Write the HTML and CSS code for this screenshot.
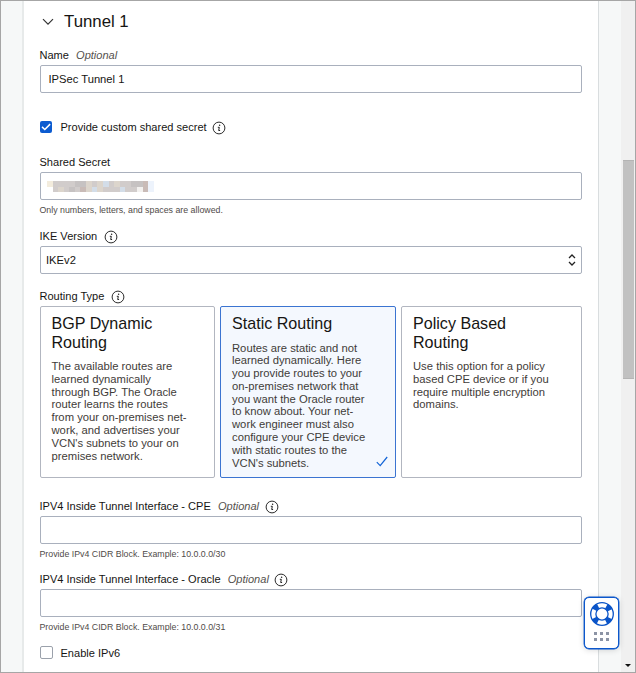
FILE: index.html
```html
<!DOCTYPE html>
<html lang="en">
<head>
<meta charset="utf-8">
<title>Tunnel 1</title>
<link rel="stylesheet" href="styles.css">
</head>
<body>
<svg class="defs" width="0" height="0" aria-hidden="true">
  <symbol id="info" viewBox="0 0 14 14">
    <circle cx="7" cy="7" r="5.9" fill="none" stroke="#2b2b2b" stroke-width="1"/>
    <circle cx="7.6" cy="4.3" r=".75" fill="#222"/>
    <path d="M5.8 6.3h1.5L6.7 9.5h1.4" fill="none" stroke="#222" stroke-width="1"/>
  </symbol>
</svg>
<div class="window">
  <main class="panel">
    <h1 class="heading">
      <svg width="12" height="8" viewBox="0 0 12 8"><path d="M1 1.2 6 6.2 11 1.2" fill="none" stroke="#333" stroke-width="1.2"/></svg>
      <span>Tunnel 1</span>
    </h1>

    <div class="label">Name <em>Optional</em></div>
    <div class="input">IPSec Tunnel 1</div>

    <div class="check-row secret-check">
      <span class="checkbox checked"><svg width="12" height="12" viewBox="0 0 13 13"><path d="M2.2 6.4 5.2 9.2 11 3.4" fill="none" stroke="#fff" stroke-width="1.6"/></svg></span>
      <span>Provide custom shared secret</span>
      <svg class="info"><use href="#info"/></svg>
    </div>

    <div class="label">Shared Secret</div>
    <div class="input"><svg class="redacted" width="107" height="11" viewBox="0 0 107 11" shape-rendering="crispEdges">
      <path fill="#d1cccb" d="M6 0h95v11H6z"/>
      <path fill="#f3ecdd" d="M0 0h6v6H0z"/>
      <path fill="#c6c2c2" d="M28 0h11v6H28zM84 0h12v6H84zM22 6h6v5h-6z"/>
      <path fill="#dcd5cc" d="M39 0h6v11h-6zM50 0h6v11h-6zM67 0h6v6h-6zM11 6h6v5h-6z"/>
      <path fill="#d3dde8" d="M56 0h6v6h-6zM45 6h5v5h-5zM73 6h5v5h-5z"/>
      <path fill="#c9bbb7" d="M96 0h5v11h-5zM33 6h6v5h-6z"/>
      <path fill="#f3f1ef" d="M90 6h6v5h-6z"/>
      <path fill="#edf3fc" d="M101 0h6v11h-6z"/>
    </svg></div>
    <div class="hint">Only numbers, letters, and spaces are allowed.</div>

    <div class="label">IKE Version <svg class="info"><use href="#info"/></svg></div>
    <div class="input select">IKEv2
      <svg width="8" height="12" viewBox="0 0 8 12"><path d="M1 4 4 1 7 4M1 8l3 3 3-3" fill="none" stroke="#222" stroke-width="1.3"/></svg>
    </div>

    <div class="label routing-label">Routing Type <svg class="info"><use href="#info"/></svg></div>
    <div class="cards">
      <section class="card">
        <h2>BGP Dynamic<br>Routing</h2>
        <p>The available routes are<br>learned dynamically<br>through BGP. The Oracle<br>router learns the routes<br>from your on-premises net-<br>work, and advertises your<br>VCN's subnets to your on<br>premises network.</p>
      </section>
      <section class="card selected">
        <h2>Static Routing</h2>
        <p>Routes are static and not<br>learned dynamically. Here<br>you provide routes to your<br>on-premises network that<br>you want the Oracle router<br>to know about. Your net-<br>work engineer must also<br>configure your CPE device<br>with static routes to the<br>VCN's subnets.</p>
        <svg class="tick" width="12" height="11" viewBox="0 0 12 11"><path d="M.8 6.2 4.2 9.6 11.2 1" fill="none" stroke="#1264d6" stroke-width="1.2"/></svg>
      </section>
      <section class="card">
        <h2>Policy Based<br>Routing</h2>
        <p>Use this option for a policy<br>based CPE device or if you<br>require multiple encryption<br>domains.</p>
      </section>
    </div>

    <div class="label cpe-label">IPV4 Inside Tunnel Interface - CPE <em>Optional</em> <svg class="info"><use href="#info"/></svg></div>
    <div class="input"></div>
    <div class="hint">Provide IPv4 CIDR Block. Example: 10.0.0.0/30</div>

    <div class="label oracle-label">IPV4 Inside Tunnel Interface - Oracle <em>Optional</em> <svg class="info"><use href="#info"/></svg></div>
    <div class="input"></div>
    <div class="hint">Provide IPv4 CIDR Block. Example: 10.0.0.0/31</div>

    <div class="check-row ipv6-check"><span class="checkbox"></span><span>Enable IPv6</span></div>
  </main>
  <div class="scrollbar"><div class="thumb"></div><div class="arrow"></div></div>
  <aside class="help">
    <svg width="26" height="26" viewBox="0 0 26 26">
      <circle cx="13" cy="13" r="8.6" fill="none" stroke="#fff" stroke-width="6"/>
      <circle cx="13" cy="13" r="8.7" fill="none" stroke="#0a54c8" stroke-width="5.4" stroke-dasharray="5.2 8.466" stroke-dashoffset="-4.23"/>
      <circle cx="13" cy="13" r="11.3" fill="none" stroke="#0a54c8" stroke-width="1.3"/>
      <circle cx="13" cy="13" r="6.1" fill="none" stroke="#0a54c8" stroke-width="1.3"/>
    </svg>
    <div class="dots"><i></i><i></i><i></i><i></i><i></i><i></i></div>
  </aside>
</div>
</body>
</html>
```
FILE: styles.css
```css
* { box-sizing: border-box; }
body { margin: 0; font: 11.05px/20px "Liberation Sans", Arial, sans-serif; color: #161513; overflow: hidden; }
.defs { position: absolute; }
.window { position: relative; display: flex; justify-content: space-between; width: 636px; height: 673px; border: 1px solid #a6a6a6; background: #f6f8f8; overflow: hidden; }
.panel { width: 577px; margin-left: 21px; padding: 0 16px 0 15.5px; border-left: 2px solid #e7eaea; border-right: 1px solid #d9dddf; background: #fff; }
.heading { display: flex; align-items: center; gap: 10px; height: 42px; margin: 0 0 2px 2.5px; font-size: 16.8px; font-weight: 400; }
.label { display: flex; align-items: center; gap: 4px; height: 20px; white-space: pre; }
.label em { color: #55524e; }
.info { flex: none; width: 14px; height: 14px; position: relative; top: 1px; }
.label em + .info { margin-left: 1.5px; }
.input { display: flex; align-items: center; height: 28px; width: 542.5px; padding: 0 8px; border: 1px solid #a9b0bd; border-radius: 2px; background: #fff; font-size: 11.2px; line-height: 18px; }
.select { justify-content: space-between; padding: 0 5px 0 5.5px; }
.hint { height: 20px; margin-bottom: 5.5px; font-size: 8.8px; color: #4f4b48; }
.check-row { display: flex; align-items: center; height: 20px; }
.checkbox { width: 13px; height: 13px; margin-right: 8px; border: 1px solid #9ba1ab; border-radius: 2px; }
.checkbox.checked { width: 12px; height: 12px; margin-right: 9px; border: 0; background: #0b5bd0; }
.checkbox svg { display: block; }
.secret-check { margin: 24px 0 15px; }
.secret-check .info { margin-left: 5.5px; }
.redacted { margin-left: -2px; }
.routing-label { margin-top: 12px; }
.cards { display: grid; grid-template-columns: 175.5px 176px 181px; gap: 5px; height: 172.5px; }
.card { position: relative; padding: 7.5px 11px; border: 1px solid #b2b6c0; border-radius: 2px; }
.card.selected { border-color: #3b74d1; background: #f4f8fe; }
.card h2 { margin: 0 0 9px; font-size: 16.1px; line-height: 18.5px; font-weight: 400; }
.card p { margin: 0; font-size: 11.25px; line-height: 12.8px; color: #3f3c39; white-space: nowrap; }
.tick { position: absolute; right: 7px; bottom: 10px; }
.cpe-label { margin-top: 17.5px; }
.oracle-label { margin-top: 5px; }
.ipv6-check { margin-top: 5.5px; }
.scrollbar { position: relative; width: 14px; padding: 159px 1px 0 2px; background: #f0f0f0; }
.thumb { height: 219px; background: #c1c1c1; border: 1px solid #b4b4b4; border-width: 1px 0; }
.arrow { position: absolute; left: 4px; bottom: 5px; border: 3px solid transparent; border-top-color: #111; border-bottom: 0; }
.help { position: absolute; left: 583px; top: 596px; width: 35px; height: 52px; padding-top: 3px; border: 1.5px solid #0b57cc; border-radius: 5px; background: #fff; box-shadow: 0 0 0 .4px #0b57cc, 0 1px 6px rgba(0,0,0,.16); }
.help svg { display: block; margin: 0 auto; }
.dots { display: grid; grid-template-columns: repeat(3, 3px); gap: 3px; justify-content: center; margin-top: 5px; }
.dots i { height: 3px; background: #8c94a5; }
```
